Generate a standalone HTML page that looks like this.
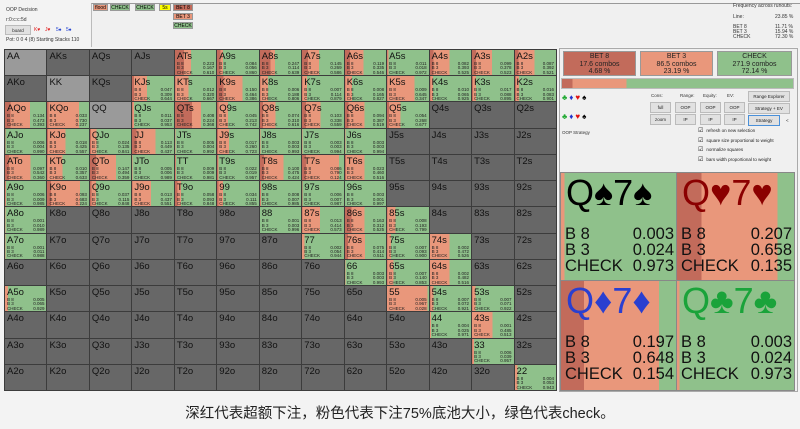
<!DOCTYPE html>
<html><head><meta charset="utf-8"><style>
*{margin:0;padding:0;box-sizing:border-box}
body{width:800px;height:429px;background:#f3f3f3;font-family:"Liberation Sans","Noto Sans CJK SC",sans-serif;position:relative;overflow:hidden}
.a{position:absolute}
.t{font-size:5px;color:#333;white-space:nowrap}
.chip{position:absolute;font-size:5px;height:7px;line-height:7px;text-align:center;border:1px solid #999}
#grid{position:absolute;left:4px;top:49px;width:553px;height:342px;background:#3c3c3c;display:grid;grid-template-columns:repeat(13,1fr);grid-template-rows:repeat(13,1fr);gap:1px;padding:1px}
#grid div{position:relative;background:#676767;overflow:hidden}
#grid div.p{background:#9a9a9a}
#grid div.k{background:linear-gradient(90deg,#c26b5b 0 var(--d),#e9977b 0 var(--s),#8fc18b 0)}
#grid b{position:absolute;left:2px;top:1px;font-size:9.5px;font-weight:normal;color:#111}
#grid i{position:absolute;left:2px;top:12px;font-style:normal;font-size:4.5px;line-height:4.4px;color:#222}
#grid u{position:absolute;right:2px;top:12px;text-decoration:none;font-size:4.5px;line-height:4.4px;color:#222;text-align:right}
.card{position:absolute;overflow:hidden}
.card .h{position:absolute;left:5px;top:0;font-size:36px;line-height:40px;white-space:nowrap}
.card .st{position:absolute;left:4px;right:2px;top:53px;font-size:16.5px;line-height:16px;color:#111}
.card .st span{float:right}
.btn{position:absolute;background:#e1e1e1;border:1px solid #bbb;font-size:4.5px;text-align:center;color:#222}
.cb{position:absolute;font-size:4.5px;color:#222;white-space:nowrap}
.cb:before{content:"☑";font-size:6px;margin-right:3px}
</style></head><body>
<div class="a t" style="left:6px;top:7px">OOP Decision</div>
<div class="a t" style="left:6px;top:17px">r:0:c:c:5d</div>
<div class="btn" style="left:5px;top:25px;width:26px;height:10px;line-height:9px">board</div>
<div class="a t" style="left:34px;top:27px;color:#e02020">K♥</div>
<div class="a t" style="left:45px;top:27px;color:#e02020">J♥</div>
<div class="a t" style="left:56px;top:27px;color:#2040d0">5♠</div>
<div class="a t" style="left:66px;top:27px;color:#2040d0">5♠</div>
<div class="a t" style="left:6px;top:37px">Pot: 0 0 4 (8) Starting Stacks 110</div>
<div class="a" style="left:91px;top:3px;width:709px;height:44px;border-top:1px solid #999;border-left:1px solid #bbb;background:#f0f0f0"></div>
<div class="chip" style="left:93px;top:4px;width:15px;background:#e9977b">flood</div>
<div class="chip" style="left:110px;top:4px;width:20px;background:#8fc18b">CHECK</div>
<div class="chip" style="left:135px;top:4px;width:20px;background:#8fc18b">CHECK</div>
<div class="chip" style="left:159px;top:4px;width:12px;background:#ffff00">5s</div>
<div class="chip" style="left:173px;top:4px;width:20px;background:#c26b5b">BET 8</div>
<div class="chip" style="left:173px;top:13px;width:20px;background:#e9977b">BET 3</div>
<div class="chip" style="left:173px;top:22px;width:20px;background:#8fc18b">CHECK</div>
<div class="a t" style="left:733px;top:3px">Frequency across runouts:</div>
<div class="a t" style="left:733px;top:14px">Line:</div><div class="a t" style="left:775px;top:14px">23.85 %</div>
<div class="a t" style="left:733px;top:25px;line-height:5px">BET 8<br>BET 3<br>CHECK</div>
<div class="a t" style="left:775px;top:25px;line-height:5px">11.71 %<br>15.94 %<br>72.30 %</div>

<div id="grid">
<div class="p"><b>AA</b></div><div><b>AKs</b></div><div><b>AQs</b></div><div><b>AJs</b></div>
<div class="k" style="--d:22%;--s:39%"><b>ATs</b><i>B 8<br>B 3<br>CHECK</i><u>0.223<br>0.167<br>0.610</u></div>
<div class="k" style="--d:8%;--s:14%"><b>A9s</b><i>B 8<br>B 3<br>CHECK</i><u>0.084<br>0.056<br>0.860</u></div>
<div class="k" style="--d:25%;--s:36%"><b>A8s</b><i>B 8<br>B 3<br>CHECK</i><u>0.247<br>0.114<br>0.639</u></div>
<div class="k" style="--d:14%;--s:41%"><b>A7s</b><i>B 8<br>B 3<br>CHECK</i><u>0.145<br>0.269<br>0.586</u></div>
<div class="k" style="--d:12%;--s:45%"><b>A6s</b><i>B 8<br>B 3<br>CHECK</i><u>0.119<br>0.335<br>0.546</u></div>
<div class="k" style="--d:1%;--s:3%"><b>A5s</b><i>B 8<br>B 3<br>CHECK</i><u>0.011<br>0.018<br>0.972</u></div>
<div class="k" style="--d:8%;--s:47%"><b>A4s</b><i>B 8<br>B 3<br>CHECK</i><u>0.082<br>0.393<br>0.525</u></div>
<div class="k" style="--d:10%;--s:48%"><b>A3s</b><i>B 8<br>B 3<br>CHECK</i><u>0.099<br>0.378<br>0.523</u></div>
<div class="k" style="--d:9%;--s:48%"><b>A2s</b><i>B 8<br>B 3<br>CHECK</i><u>0.087<br>0.392<br>0.521</u></div>

<div><b>AKo</b></div><div class="p"><b>KK</b></div><div><b>KQs</b></div>
<div class="k" style="--d:5%;--s:36%"><b>KJs</b><i>B 8<br>B 3<br>CHECK</i><u>0.047<br>0.309<br>0.644</u></div>
<div class="k" style="--d:1%;--s:33%"><b>KTs</b><i>B 8<br>B 3<br>CHECK</i><u>0.012<br>0.320<br>0.667</u></div>
<div class="k" style="--d:15%;--s:61%"><b>K9s</b><i>B 8<br>B 3<br>CHECK</i><u>0.150<br>0.464<br>0.386</u></div>
<div class="k" style="--d:1%;--s:19%"><b>K8s</b><i>B 8<br>B 3<br>CHECK</i><u>0.006<br>0.188<br>0.806</u></div>
<div class="k" style="--d:1%;--s:12%"><b>K7s</b><i>B 8<br>B 3<br>CHECK</i><u>0.007<br>0.114<br>0.879</u></div>
<div class="k" style="--d:1%;--s:17%"><b>K6s</b><i>B 8<br>B 3<br>CHECK</i><u>0.008<br>0.165<br>0.827</u></div>
<div class="k" style="--d:1%;--s:65%"><b>K5s</b><i>B 8<br>B 3<br>CHECK</i><u>0.009<br>0.645<br>0.347</u></div>
<div class="k" style="--d:1%;--s:7%"><b>K4s</b><i>B 8<br>B 3<br>CHECK</i><u>0.010<br>0.065<br>0.925</u></div>
<div class="k" style="--d:2%;--s:10%"><b>K3s</b><i>B 8<br>B 3<br>CHECK</i><u>0.017<br>0.088<br>0.895</u></div>
<div class="k" style="--d:2%;--s:10%"><b>K2s</b><i>B 8<br>B 3<br>CHECK</i><u>0.016<br>0.083<br>0.901</u></div>

<div class="k" style="--d:13%;--s:61%"><b>AQo</b><i>B 8<br>B 3<br>CHECK</i><u>0.134<br>0.473<br>0.393</u></div>
<div class="k" style="--d:3%;--s:76%"><b>KQo</b><i>B 8<br>B 3<br>CHECK</i><u>0.033<br>0.730<br>0.237</u></div>
<div class="p"><b>QQ</b></div>
<div class="k" style="--d:1%;--s:5%"><b>QJs</b><i>B 8<br>B 3<br>CHECK</i><u>0.011<br>0.037<br>0.953</u></div>
<div class="k" style="--d:41%;--s:63%"><b>QTs</b><i>B 8<br>B 3<br>CHECK</i><u>0.408<br>0.224<br>0.368</u></div>
<div class="k" style="--d:4%;--s:26%"><b>Q9s</b><i>B 8<br>B 3<br>CHECK</i><u>0.045<br>0.213<br>0.742</u></div>
<div class="k" style="--d:7%;--s:38%"><b>Q8s</b><i>B 8<br>B 3<br>CHECK</i><u>0.074<br>0.310<br>0.616</u></div>
<div class="k" style="--d:10%;--s:44%"><b>Q7s</b><i>B 8<br>B 3<br>CHECK</i><u>0.103<br>0.338<br>0.559</u></div>
<div class="k" style="--d:9%;--s:48%"><b>Q6s</b><i>B 8<br>B 3<br>CHECK</i><u>0.094<br>0.387<br>0.519</u></div>
<div class="k" style="--d:5%;--s:32%"><b>Q5s</b><i>B 8<br>B 3<br>CHECK</i><u>0.054<br>0.268<br>0.677</u></div>
<div><b>Q4s</b></div><div><b>Q3s</b></div><div><b>Q2s</b></div>

<div class="k" style="--d:1%;--s:1%"><b>AJo</b><i>B 8<br>B 3<br>CHECK</i><u>0.006<br>0.004<br>0.990</u></div>
<div class="k" style="--d:2%;--s:44%"><b>KJo</b><i>B 8<br>B 3<br>CHECK</i><u>0.018<br>0.425<br>0.557</u></div>
<div class="k" style="--d:2%;--s:16%"><b>QJo</b><i>B 8<br>B 3<br>CHECK</i><u>0.024<br>0.135<br>0.841</u></div>
<div class="k" style="--d:11%;--s:56%"><b>JJ</b><i>B 8<br>B 3<br>CHECK</i><u>0.113<br>0.449<br>0.437</u></div>
<div class="k" style="--d:0%;--s:1%"><b>JTs</b><i>B 8<br>B 3<br>CHECK</i><u>0.005<br>0.004<br>0.992</u></div>
<div class="k" style="--d:2%;--s:28%"><b>J9s</b><i>B 8<br>B 3<br>CHECK</i><u>0.017<br>0.260<br>0.723</u></div>
<div class="k" style="--d:0%;--s:1%"><b>J8s</b><i>B 8<br>B 3<br>CHECK</i><u>0.003<br>0.003<br>0.993</u></div>
<div class="k" style="--d:0%;--s:1%"><b>J7s</b><i>B 8<br>B 3<br>CHECK</i><u>0.003<br>0.003<br>0.994</u></div>
<div class="k" style="--d:0%;--s:1%"><b>J6s</b><i>B 8<br>B 3<br>CHECK</i><u>0.003<br>0.003<br>0.994</u></div>
<div><b>J5s</b></div><div><b>J4s</b></div><div><b>J3s</b></div><div><b>J2s</b></div>

<div class="k" style="--d:10%;--s:62%"><b>ATo</b><i>B 8<br>B 3<br>CHECK</i><u>0.097<br>0.542<br>0.360</u></div>
<div class="k" style="--d:1%;--s:37%"><b>KTo</b><i>B 8<br>B 3<br>CHECK</i><u>0.010<br>0.357<br>0.633</u></div>
<div class="k" style="--d:15%;--s:64%"><b>QTo</b><i>B 8<br>B 3<br>CHECK</i><u>0.147<br>0.494<br>0.359</u></div>
<div class="k" style="--d:0%;--s:1%"><b>JTo</b><i>B 8<br>B 3<br>CHECK</i><u>0.005<br>0.006<br>0.989</u></div>
<div class="k" style="--d:1%;--s:2%"><b>TT</b><i>B 8<br>B 3<br>CHECK</i><u>0.009<br>0.009<br>0.981</u></div>
<div class="k" style="--d:2%;--s:4%"><b>T9s</b><i>B 8<br>B 3<br>CHECK</i><u>0.022<br>0.019<br>0.957</u></div>
<div class="k" style="--d:10%;--s:57%"><b>T8s</b><i>B 8<br>B 3<br>CHECK</i><u>0.100<br>0.475<br>0.424</u></div>
<div class="k" style="--d:9%;--s:88%"><b>T7s</b><i>B 8<br>B 3<br>CHECK</i><u>0.086<br>0.790<br>0.124</u></div>
<div class="k" style="--d:2%;--s:48%"><b>T6s</b><i>B 8<br>B 3<br>CHECK</i><u>0.023<br>0.460<br>0.516</u></div>
<div><b>T5s</b></div><div><b>T4s</b></div><div><b>T3s</b></div><div><b>T2s</b></div>

<div class="k" style="--d:1%;--s:2%"><b>A9o</b><i>B 8<br>B 3<br>CHECK</i><u>0.006<br>0.009<br>0.985</u></div>
<div class="k" style="--d:9%;--s:78%"><b>K9o</b><i>B 8<br>B 3<br>CHECK</i><u>0.093<br>0.683<br>0.224</u></div>
<div class="k" style="--d:4%;--s:15%"><b>Q9o</b><i>B 8<br>B 3<br>CHECK</i><u>0.037<br>0.115<br>0.848</u></div>
<div class="k" style="--d:1%;--s:45%"><b>J9o</b><i>B 8<br>B 3<br>CHECK</i><u>0.013<br>0.437<br>0.551</u></div>
<div class="k" style="--d:6%;--s:15%"><b>T9o</b><i>B 8<br>B 3<br>CHECK</i><u>0.058<br>0.093<br>0.848</u></div>
<div class="k" style="--d:3%;--s:14%"><b>99</b><i>B 8<br>B 3<br>CHECK</i><u>0.034<br>0.111<br>0.855</u></div>
<div class="k" style="--d:1%;--s:2%"><b>98s</b><i>B 8<br>B 3<br>CHECK</i><u>0.008<br>0.007<br>0.985</u></div>
<div class="k" style="--d:1%;--s:1%"><b>97s</b><i>B 8<br>B 3<br>CHECK</i><u>0.006<br>0.007<br>0.987</u></div>
<div class="k" style="--d:0%;--s:0%"><b>96s</b><i>B 8<br>B 3<br>CHECK</i><u>0.003<br>0.001<br>0.997</u></div>
<div><b>95s</b></div><div><b>94s</b></div><div><b>93s</b></div><div><b>92s</b></div>

<div class="k" style="--d:0%;--s:1%"><b>A8o</b><i>B 8<br>B 3<br>CHECK</i><u>0.001<br>0.010<br>0.989</u></div>
<div><b>K8o</b></div><div><b>Q8o</b></div><div><b>J8o</b></div><div><b>T8o</b></div><div><b>98o</b></div>
<div class="k" style="--d:0%;--s:0%"><b>88</b><i>B 8<br>B 3<br>CHECK</i><u>0.001<br>0.003<br>0.996</u></div>
<div class="k" style="--d:1%;--s:43%"><b>87s</b><i>B 8<br>B 3<br>CHECK</i><u>0.013<br>0.414<br>0.573</u></div>
<div class="k" style="--d:16%;--s:47%"><b>86s</b><i>B 8<br>B 3<br>CHECK</i><u>0.163<br>0.312<br>0.525</u></div>
<div class="k" style="--d:1%;--s:20%"><b>85s</b><i>B 8<br>B 3<br>CHECK</i><u>0.008<br>0.193<br>0.799</u></div>
<div><b>84s</b></div><div><b>83s</b></div><div><b>82s</b></div>

<div class="k" style="--d:0%;--s:1%"><b>A7o</b><i>B 8<br>B 3<br>CHECK</i><u>0.001<br>0.011<br>0.988</u></div>
<div><b>K7o</b></div><div><b>Q7o</b></div><div><b>J7o</b></div><div><b>T7o</b></div><div><b>97o</b></div><div><b>87o</b></div>
<div class="k" style="--d:0%;--s:6%"><b>77</b><i>B 8<br>B 3<br>CHECK</i><u>0.002<br>0.054<br>0.944</u></div>
<div class="k" style="--d:7%;--s:49%"><b>76s</b><i>B 8<br>B 3<br>CHECK</i><u>0.075<br>0.414<br>0.511</u></div>
<div class="k" style="--d:1%;--s:10%"><b>75s</b><i>B 8<br>B 3<br>CHECK</i><u>0.007<br>0.093<br>0.900</u></div>
<div class="k" style="--d:0%;--s:47%"><b>74s</b><i>B 8<br>B 3<br>CHECK</i><u>0.002<br>0.472<br>0.526</u></div>
<div><b>73s</b></div><div><b>72s</b></div>

<div><b>A6o</b></div><div><b>K6o</b></div><div><b>Q6o</b></div><div><b>J6o</b></div><div><b>T6o</b></div><div><b>96o</b></div><div><b>86o</b></div><div><b>76o</b></div>
<div class="k" style="--d:0%;--s:1%"><b>66</b><i>B 8<br>B 3<br>CHECK</i><u>0.003<br>0.003<br>0.993</u></div>
<div class="k" style="--d:1%;--s:15%"><b>65s</b><i>B 8<br>B 3<br>CHECK</i><u>0.007<br>0.140<br>0.853</u></div>
<div class="k" style="--d:0%;--s:48%"><b>64s</b><i>B 8<br>B 3<br>CHECK</i><u>0.002<br>0.482<br>0.516</u></div>
<div><b>63s</b></div><div><b>62s</b></div>

<div class="k" style="--d:0%;--s:7%"><b>A5o</b><i>B 8<br>B 3<br>CHECK</i><u>0.005<br>0.065<br>0.929</u></div>
<div><b>K5o</b></div><div><b>Q5o</b></div><div><b>J5o</b></div><div><b>T5o</b></div><div><b>95o</b></div><div><b>85o</b></div><div><b>75o</b></div><div><b>65o</b></div>
<div class="k" style="--d:0%;--s:97%"><b>55</b><i>B 8<br>B 3<br>CHECK</i><u>0.005<br>0.967<br>0.028</u></div>
<div class="k" style="--d:1%;--s:8%"><b>54s</b><i>B 8<br>B 3<br>CHECK</i><u>0.007<br>0.072<br>0.921</u></div>
<div class="k" style="--d:1%;--s:8%"><b>53s</b><i>B 8<br>B 3<br>CHECK</i><u>0.007<br>0.071<br>0.922</u></div>
<div><b>52s</b></div>

<div><b>A4o</b></div><div><b>K4o</b></div><div><b>Q4o</b></div><div><b>J4o</b></div><div><b>T4o</b></div><div><b>94o</b></div><div><b>84o</b></div><div><b>74o</b></div><div><b>64o</b></div><div><b>54o</b></div>
<div class="k" style="--d:0%;--s:3%"><b>44</b><i>B 8<br>B 3<br>CHECK</i><u>0.004<br>0.025<br>0.971</u></div>
<div class="k" style="--d:0%;--s:49%"><b>43s</b><i>B 8<br>B 3<br>CHECK</i><u>0.001<br>0.485<br>0.513</u></div>
<div><b>42s</b></div>

<div><b>A3o</b></div><div><b>K3o</b></div><div><b>Q3o</b></div><div><b>J3o</b></div><div><b>T3o</b></div><div><b>93o</b></div><div><b>83o</b></div><div><b>73o</b></div><div><b>63o</b></div><div><b>53o</b></div><div><b>43o</b></div>
<div class="k" style="--d:1%;--s:5%"><b>33</b><i>B 8<br>B 3<br>CHECK</i><u>0.006<br>0.039<br>0.957</u></div>
<div><b>32s</b></div>

<div><b>A2o</b></div><div><b>K2o</b></div><div><b>Q2o</b></div><div><b>J2o</b></div><div><b>T2o</b></div><div><b>92o</b></div><div><b>82o</b></div><div><b>72o</b></div><div><b>62o</b></div><div><b>52o</b></div><div><b>42o</b></div><div><b>32o</b></div>
<div class="k" style="--d:0%;--s:6%"><b>22</b><i>B 8<br>B 3<br>CHECK</i><u>0.004<br>0.053<br>0.943</u></div>
</div>

<div class="a" style="left:559px;top:48px;width:239px;height:344px;border:1px solid #aaa;background:#f0f0f0"></div>
<div class="a" style="left:563px;top:51px;width:73px;height:25px;background:#c26b5b;border:1px solid #999;font-size:7px;line-height:7.5px;text-align:center;padding-top:1px;color:#222">BET 8<br>17.6 combos<br>4.68 %</div>
<div class="a" style="left:640px;top:51px;width:73px;height:25px;background:#e9977b;border:1px solid #999;font-size:7px;line-height:7.5px;text-align:center;padding-top:1px;color:#222">BET 3<br>86.5 combos<br>23.19 %</div>
<div class="a" style="left:717px;top:51px;width:75px;height:25px;background:#8fc18b;border:1px solid #999;font-size:7px;line-height:7.5px;text-align:center;padding-top:1px;color:#222">CHECK<br>271.9 combos<br>72.14 %</div>
<div class="a" style="left:561px;top:78px;width:233px;height:11px;border:1px solid #bbb;background:linear-gradient(90deg,#c26b5b 0 4.5%,#e9977b 0 28%,#8fc18b 0)"></div>
<div class="a" style="left:562px;top:93px;font-size:8px;letter-spacing:2px"><span style="color:#22aa33">♣</span><span style="color:#2233cc">♦</span><span style="color:#e01010">♥</span><span style="color:#000">♠</span></div>
<div class="a" style="left:562px;top:112px;font-size:8px;letter-spacing:2px"><span style="color:#22aa33">♣</span><span style="color:#2233cc">♦</span><span style="color:#e01010">♥</span><span style="color:#000">♠</span></div>
<div class="a t" style="left:651px;top:93px;font-size:4.5px">Cons:</div>
<div class="a t" style="left:680px;top:93px;font-size:4.5px">Range:</div>
<div class="a t" style="left:703px;top:93px;font-size:4.5px">Equity:</div>
<div class="a t" style="left:727px;top:93px;font-size:4.5px">EV:</div>
<div class="btn" style="left:650px;top:102px;width:21px;height:11px;line-height:10px">full</div>
<div class="btn" style="left:650px;top:114px;width:21px;height:11px;line-height:10px">zoom</div>
<div class="btn" style="left:675px;top:102px;width:21px;height:11px;line-height:10px">OOP</div>
<div class="btn" style="left:675px;top:114px;width:21px;height:11px;line-height:10px">IP</div>
<div class="btn" style="left:700px;top:102px;width:21px;height:11px;line-height:10px">OOP</div>
<div class="btn" style="left:700px;top:114px;width:21px;height:11px;line-height:10px">IP</div>
<div class="btn" style="left:724px;top:102px;width:21px;height:11px;line-height:10px">OOP</div>
<div class="btn" style="left:724px;top:114px;width:21px;height:11px;line-height:10px">IP</div>
<div class="btn" style="left:748px;top:91px;width:42px;height:11px;line-height:10px">Range Explorer</div>
<div class="btn" style="left:748px;top:103px;width:42px;height:11px;line-height:10px">Strategy + EV</div>
<div class="btn" style="left:748px;top:115px;width:32px;height:11px;line-height:9px;border-color:#4a90d9">Strategy</div>
<div class="a t" style="left:786px;top:118px;font-size:4.5px">&lt;</div>
<div class="a t" style="left:562px;top:130px;font-size:4.5px">OOP Strategy</div>
<div class="cb" style="left:698px;top:127px">refresh on new selection</div>
<div class="cb" style="left:698px;top:137px">square size proportional to weight</div>
<div class="cb" style="left:698px;top:146px">normalize squares</div>
<div class="cb" style="left:698px;top:156px">bars width proportional to weight</div>

<div class="a" style="left:560px;top:172px;width:235px;height:219px;background:#888"></div>
<div class="card" style="left:561px;top:173px;width:115px;height:107px;background:linear-gradient(90deg,#e9977b 0 3%,#8fc18b 0)"><div class="h" style="color:#000">Q♠7♠</div><div class="st">B 8<span>0.003</span><br>B 3<span>0.024</span><br>CHECK<span>0.973</span></div></div>
<div class="card" style="left:677px;top:173px;width:117px;height:107px;background:linear-gradient(90deg,#c26b5b 0 21%,#e9977b 0 86%,#8fc18b 0)"><div class="h" style="color:#8b0000">Q♥7♥</div><div class="st">B 8<span>0.207</span><br>B 3<span>0.658</span><br>CHECK<span>0.135</span></div></div>
<div class="card" style="left:561px;top:281px;width:115px;height:109px;background:linear-gradient(90deg,#c26b5b 0 20%,#e9977b 0 85%,#8fc18b 0)"><div class="h" style="color:#2a3fd0">Q♦7♦</div><div class="st">B 8<span>0.197</span><br>B 3<span>0.648</span><br>CHECK<span>0.154</span></div></div>
<div class="card" style="left:677px;top:281px;width:117px;height:109px;background:linear-gradient(90deg,#e9977b 0 2%,#8fc18b 0)"><div class="h" style="color:#1aa33a">Q♣7♣</div><div class="st">B 8<span>0.003</span><br>B 3<span>0.024</span><br>CHECK<span>0.973</span></div></div>

<div class="a" style="left:0;top:402px;width:800px;text-align:center;font-size:14.5px;color:#222">深红代表超额下注，粉色代表下注75%底池大小，绿色代表check。</div>
</body></html>
